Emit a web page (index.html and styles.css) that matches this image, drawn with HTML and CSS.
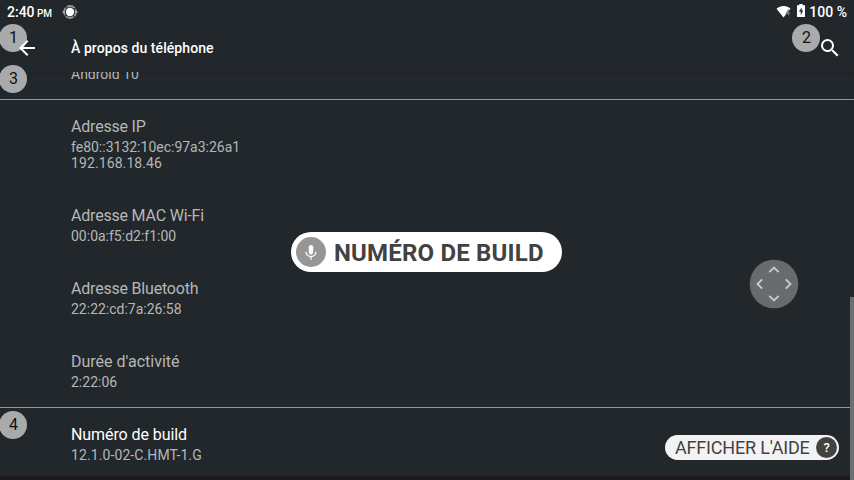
FILE: index.html
```html
<!DOCTYPE html>
<html lang="fr">
<head>
<meta charset="utf-8">
<title>À propos du téléphone</title>
<link rel="stylesheet" href="styles.css">
</head>
<body>
<div class="screen">
  <header class="status">
    <span class="clock">2:40</span><span class="ampm">PM</span>
    <svg class="target" width="16" height="16" viewBox="0 0 16 16"><circle cx="8" cy="8" r="6" fill="none" stroke="#8f9394" stroke-width="1.800" stroke-dasharray="8.400 1.020" stroke-dashoffset="4"/><circle cx="8" cy="8" r="4.200" fill="#fff"/><path d="M.5 8H3M13 8h2.500" stroke="#b4b6b7" stroke-width="1.500"/></svg>
    <svg class="wifi" width="16" height="14" viewBox="0 0 16 14"><path d="M.5 3.700C4.500.2 11 .2 14.500 3.700L7.500 12.500z" fill="#fff"/><path d="M12.700 4.500 10 8.500h4M12.700 4.500v6" fill="none" stroke="#777b7d" stroke-width="1"/></svg>
    <svg class="battery" width="8" height="14" viewBox="0 0 8 14"><path d="M2.300 0h3.400v1.300H8V13H0V1.300h2.300z" fill="#fff"/><path d="M4.700 3.500 1.900 7.500h1.800v3.500L6.300 6.500H4.700z" fill="#22272b"/></svg>
    <span class="percent">100 %</span>
  </header>
  <nav class="toolbar">
    <svg class="back" width="24" height="24" viewBox="0 0 24 24"><path d="M20 11H7.830l5.590-5.590L12 4l-8 8 8 8 1.410-1.410L7.830 13H20z" fill="#fff"/></svg>
    <h1>À propos du téléphone</h1>
    <svg class="search" width="24" height="24" viewBox="0 0 24 24"><path d="M15.500 14h-.79l-.28-.27A6.470 6.470 0 0 0 16 9.500 6.500 6.500 0 1 0 9.500 16c1.610 0 3.090-.59 4.230-1.570l.27.28v.79l5 4.990L20.490 19zm-6 0a4.500 4.500 0 1 1 0-9 4.500 4.500 0 0 1 0 9z" fill="#fff"/></svg>
  </nav>
  <main class="list">
    <section class="row partial divided"><p>Android 10</p></section>
    <section class="row"><h2>Adresse IP</h2><p>fe80::3132:10ec:97a3:26a1<br><span class="loose">192.168.18.46</span></p></section>
    <section class="row"><h2>Adresse MAC Wi-Fi</h2><p>00:0a:f5:d2:f1:00</p></section>
    <section class="row"><h2>Adresse Bluetooth</h2><p>22:22:cd:7a:26:58</p></section>
    <section class="row uptime divided"><h2>Durée d'activité</h2><p>2:22:06</p></section>
    <section class="row active"><h2>Numéro de build</h2><p class="loose">12.1.0-02-C.HMT-1.G</p></section>
  </main>
  <span class="badge b1">1</span>
  <span class="badge b2">2</span>
  <span class="badge b3">3</span>
  <span class="badge b4">4</span>
  <div class="command">
    <svg width="30" height="30" viewBox="0 0 30 30"><circle cx="15" cy="15" r="15" fill="#969696"/><rect x="12.800" y="8" width="4.400" height="9.500" rx="2.200" fill="#fff"/><path d="M10 14.800a5 4.700 0 0 0 10 0M15 19.500v3.200" fill="none" stroke="#fff" stroke-width="1.300"/></svg>
    <span>NUMÉRO DE BUILD</span>
  </div>
  <svg class="pad" width="50" height="50" viewBox="0 0 50 50"><circle cx="25" cy="25" r="24.300" fill="#676b6c"/><path d="M20.300 13.200 25 8.500l4.700 4.700M20.300 36.800l4.700 4.700 4.700-4.700M13.200 20.300 8.500 25l4.700 4.700M36.800 20.300l4.700 4.700-4.700 4.700" fill="none" stroke="#c8c9ca" stroke-width="1.900"/></svg>
  <div class="help"><span>AFFICHER L'AIDE</span><b>?</b></div>
  <div class="scrollbar"></div>
  <div class="edge"></div>
</div>
</body>
</html>
```
FILE: styles.css
```css
* { box-sizing: border-box; }
body { margin: 0; background: #22272b; font-family: Roboto, "Liberation Sans", sans-serif; }
h1, h2, p { margin: 0; }
svg { display: block; flex: none; }
.screen { position: relative; width: 854px; height: 480px; overflow: hidden; display: flex; flex-direction: column; background: #22272b; }
.status { height: 24px; flex: none; display: flex; align-items: center; padding: 0 7px 0 7px; color: #fff; font-weight: 500; font-size: 14px; line-height: 24px; white-space: nowrap; }
.ampm { width: 15px; font-size: 10px; letter-spacing: -0.3px; margin: 3px 0 0 2.5px; }
.target { margin-left: 9.5px; }
.wifi { margin-left: auto; }
.battery { margin: 0 4px 2px 5px; }
.toolbar { height: 48px; flex: none; display: flex; align-items: center; padding: 0 12px 0 15px; color: #fff; }
.toolbar h1 { margin-left: 32px; font-size: 14px; font-weight: 500; letter-spacing: 0.07px; }
.search { margin-left: auto; }
.list { flex: 1; min-height: 0; overflow: hidden; box-shadow: inset 0 2px 2px -1px #1e2326; }
.row { padding: 17px 71px 18px; color: #b5b7b8; }
.row h2 { font-size: 16px; font-weight: 400; line-height: 20px; letter-spacing: -0.2px; }
.row p { margin-top: 2px; font-size: 14px; line-height: 16px; }
.row .loose { letter-spacing: 0.1px; }
.divided { height: 73px; border-bottom: 1px solid #96999b; }
.partial { display: flow-root; height: 28px; padding-top: 0; padding-bottom: 0; }
.partial p { margin-top: -6px; }
.uptime h2 { letter-spacing: 0; }
.active h2 { color: #fff; letter-spacing: -0.08px; }
.badge { position: absolute; width: 28px; height: 28px; padding-left: 1px; border-radius: 50%; background: #a9aaab; color: #111; font-size: 16px; line-height: 27px; text-align: center; }
.b1 { left: -1px; top: 24px; z-index: 0; }
.b2 { left: 792px; top: 24px; }
.b3 { left: -1px; top: 65px; }
.b4 { left: -1px; top: 411px; }
.back { position: relative; z-index: 1; }
.command { position: absolute; left: 291px; top: 232px; width: 271px; height: 40px; padding-left: 5px; display: flex; align-items: center; gap: 8px; border-radius: 20px; background: #fff; color: #424242; font-size: 24px; font-weight: 700; letter-spacing: 0.18px; white-space: nowrap; }
.command span { padding-top: 2px; }
.pad { position: absolute; left: 749px; top: 259px; }
.help { position: absolute; left: 665px; top: 435px; width: 174px; height: 25px; padding: 0 2px 0 10px; display: flex; align-items: center; justify-content: space-between; border-radius: 13px; background: #f3f3f3; color: #424242; font-size: 18px; letter-spacing: -0.18px; white-space: nowrap; }
.help b { width: 21px; height: 21px; border-radius: 50%; background: #424242; color: #fff; font-size: 13px; font-weight: 500; line-height: 21px; text-align: center; }
.scrollbar { position: absolute; left: 850px; top: 297px; width: 4px; height: 183px; background: #6b6f71; }
.edge { position: absolute; left: 0; top: 476px; width: 850px; height: 4px; background: #1d191f; }
```
